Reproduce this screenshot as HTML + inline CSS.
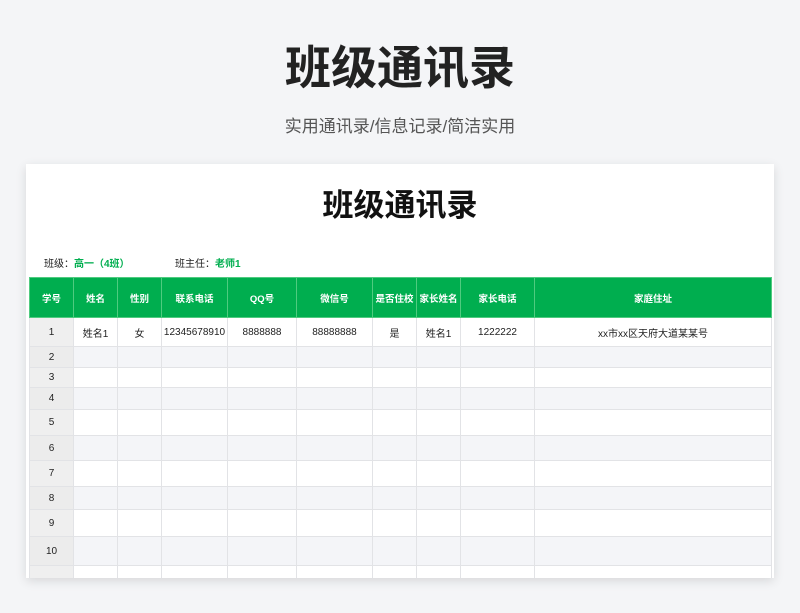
<!DOCTYPE html><html><head><meta charset="utf-8"><style>
body{margin:0;width:800px;height:613px;background:#f4f5f7;font-family:"Liberation Sans","Noto Sans CJK SC",sans-serif;position:relative;overflow:hidden}
.t{position:absolute;left:0;width:800px;text-align:center}
.card{position:absolute;left:26px;top:164px;width:748px;height:414px;background:#fff;box-shadow:0 3px 10px rgba(0,0,0,.12);overflow:hidden}
table{position:absolute;left:3px;top:113px;border-collapse:collapse;table-layout:fixed;font-size:10px;color:#222}
td,th{border:1px solid #e2e3e6;text-align:center;padding:0}
th{background:#00ae4f;color:#fff;font-weight:bold;border-color:#4fcb7f;height:39px;font-size:9.5px}
td:first-child{background:#efefef}
tr.g td{background:#f4f5f8}tr.g td:first-child{background:#ececec}
</style></head><body>
<div class="t" style="top:38px;font-size:46px;font-weight:bold;color:#222;line-height:60px">班级通讯录</div>
<div class="t" style="top:116px;font-size:17px;color:#555;line-height:22px">实用通讯录/信息记录/简洁实用</div>
<div class="card">
<div style="position:absolute;left:0;width:748px;top:22px;text-align:center;font-size:31px;font-weight:bold;color:#111;line-height:40px">班级通讯录</div>
<div style="position:absolute;left:18px;top:91px;font-size:10px;color:#222">班级：<b style="color:#00ae4f">高一（4班）</b></div>
<div style="position:absolute;left:149px;top:91px;font-size:10px;color:#222">班主任：<b style="color:#00ae4f">老师1</b></div>
<table>
<colgroup><col style="width:44px"><col style="width:44px"><col style="width:44px"><col style="width:66px"><col style="width:69px"><col style="width:76px"><col style="width:44px"><col style="width:44px"><col style="width:74px"><col style="width:237px"></colgroup>
<tr><th>学号</th><th>姓名</th><th>性别</th><th>联系电话</th><th>QQ号</th><th>微信号</th><th>是否住校</th><th>家长姓名</th><th>家长电话</th><th>家庭住址</th></tr>
<tr style="height:29px"><td>1</td><td>姓名1</td><td>女</td><td>12345678910</td><td>8888888</td><td>88888888</td><td>是</td><td>姓名1</td><td>1222222</td><td>xx市xx区天府大道某某号</td></tr>
<tr class="g" style="height:21px"><td>2</td><td></td><td></td><td></td><td></td><td></td><td></td><td></td><td></td><td></td></tr>
<tr style="height:20px"><td>3</td><td></td><td></td><td></td><td></td><td></td><td></td><td></td><td></td><td></td></tr>
<tr class="g" style="height:22px"><td>4</td><td></td><td></td><td></td><td></td><td></td><td></td><td></td><td></td><td></td></tr>
<tr style="height:26px"><td>5</td><td></td><td></td><td></td><td></td><td></td><td></td><td></td><td></td><td></td></tr>
<tr class="g" style="height:25px"><td>6</td><td></td><td></td><td></td><td></td><td></td><td></td><td></td><td></td><td></td></tr>
<tr style="height:26px"><td>7</td><td></td><td></td><td></td><td></td><td></td><td></td><td></td><td></td><td></td></tr>
<tr class="g" style="height:23px"><td>8</td><td></td><td></td><td></td><td></td><td></td><td></td><td></td><td></td><td></td></tr>
<tr style="height:27px"><td>9</td><td></td><td></td><td></td><td></td><td></td><td></td><td></td><td></td><td></td></tr>
<tr class="g" style="height:29px"><td>10</td><td></td><td></td><td></td><td></td><td></td><td></td><td></td><td></td><td></td></tr>
<tr style="height:20px"><td></td><td></td><td></td><td></td><td></td><td></td><td></td><td></td><td></td><td></td></tr>
</table>
</div>
</body></html>
